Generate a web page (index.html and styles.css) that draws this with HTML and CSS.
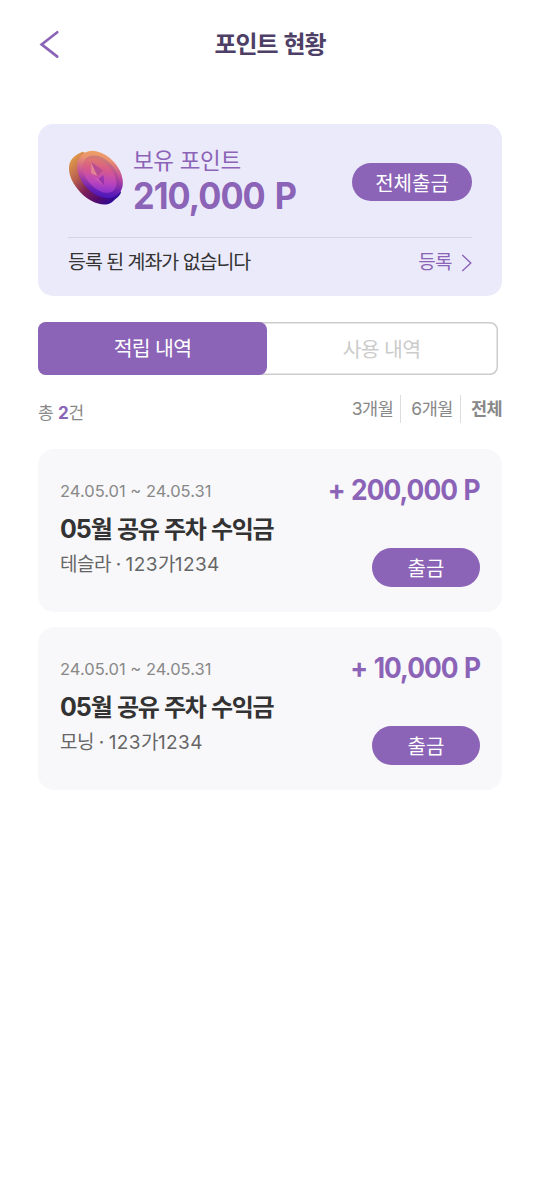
FILE: index.html
```html
<!DOCTYPE html>
<html lang="ko">
<head>
<meta charset="utf-8">
<title>포인트 현황</title>
<link rel="stylesheet" href="styles.css">
</head>
<body>
<header class="header">
  <svg class="back" width="22" height="30" viewBox="0 0 22 30"><path d="M19.3 3.2 3.6 15.4 19.3 27.6" fill="none" stroke="#8b63b7" stroke-width="2.6" stroke-linecap="round" stroke-linejoin="miter"/></svg>
  <h1 class="title">포인트 현황</h1>
</header>
<main class="main">
  <section class="balance">
    <div class="balance-top">
      <svg class="coin" width="56" height="58" viewBox="0 0 56 58">
        <defs>
          <linearGradient id="side" gradientUnits="userSpaceOnUse" x1="2" y1="14" x2="46" y2="54"><stop offset="0" stop-color="#dc944a"/><stop offset=".25" stop-color="#b9604f"/><stop offset=".5" stop-color="#7d2158"/><stop offset=".75" stop-color="#550a6c"/><stop offset="1" stop-color="#2b0a9c"/></linearGradient>
          <linearGradient id="rim" gradientUnits="userSpaceOnUse" x1="12" y1="4" x2="50" y2="48"><stop offset="0" stop-color="#f0b05a"/><stop offset=".25" stop-color="#ea9070"/><stop offset=".5" stop-color="#c5509c"/><stop offset=".75" stop-color="#7022b4"/><stop offset="1" stop-color="#2a0cc0"/></linearGradient>
          <linearGradient id="face" gradientUnits="userSpaceOnUse" x1="17" y1="10" x2="47" y2="42"><stop offset="0" stop-color="#e2885f"/><stop offset=".35" stop-color="#d85c88"/><stop offset=".65" stop-color="#bb45bd"/><stop offset="1" stop-color="#7428d4"/></linearGradient>
        </defs>
        <path d="M15 2.800C8 5 1.500 10 1 18c-.5 9 4.500 18 11.500 25.500S30 56.500 38.500 55.400c4-.5 6.500-3 9-5.400 2-1.800 4.500-3.500 5.500-6.500L40 20Z" fill="url(#side)"/>
        <ellipse cx="32" cy="25.500" rx="27" ry="18.800" transform="rotate(48 32 25.500)" fill="url(#rim)"/>
        <ellipse cx="33" cy="25" rx="21.500" ry="14" transform="rotate(48 33 25)" fill="#8a3598" opacity=".28"/>
        <ellipse cx="31.700" cy="26.300" rx="20.500" ry="12.800" transform="rotate(48 31.700 26.300)" fill="url(#face)"/>
        <path d="M23 13 23.200 24.500 29.500 27Z" fill="#e08394"/><path d="M23 13 29.500 27 35 21.500Z" fill="#b84c92"/>
        <path d="M25.500 28 30.500 30 35.500 26 36.500 37.500Z" fill="#cc5ab4"/><path d="M30.500 30 35.500 26 36.500 37.500Z" fill="#9a35b0"/>
      </svg>
      <div class="points">
        <div class="points-label">보유 포인트</div>
        <div class="points-value">210,000 P</div>
      </div>
      <button class="pill pill-all">전체출금</button>
    </div>
    <div class="account">
      <span class="account-text">등록 된 계좌가 없습니다</span>
      <a class="register">등록<svg width="11" height="18" viewBox="0 0 11 18"><path d="M1.3 1 9.8 9 1.3 17" fill="none" stroke="#8b63b7" stroke-width="1.4"/></svg></a>
    </div>
  </section>
  <nav class="tabs">
    <div class="tab tab-active">적립 내역</div>
    <div class="tab tab-idle">사용 내역</div>
  </nav>
  <div class="summary">
    <div class="count">총 <b>2</b>건</div>
    <div class="filters"><span class="filter">3개월</span><span class="filter">6개월</span><span class="filter filter-on">전체</span></div>
  </div>
  <article class="card">
    <div class="info">
      <div class="date">24.05.01 ~ 24.05.31</div>
      <h2 class="name"><span class="name-num">05</span>월 공유 주차 수익금</h2>
      <div class="car">테슬라 · <span class="car-num">123</span>가<span class="car-num">1234</span></div>
    </div>
    <div class="side">
      <div class="amount">+ 200,000 P</div>
      <button class="pill pill-out">출금</button>
    </div>
  </article>
  <article class="card">
    <div class="info">
      <div class="date">24.05.01 ~ 24.05.31</div>
      <h2 class="name"><span class="name-num">05</span>월 공유 주차 수익금</h2>
      <div class="car">모닝 · <span class="car-num">123</span>가<span class="car-num">1234</span></div>
    </div>
    <div class="side">
      <div class="amount">+ 10,000 P</div>
      <button class="pill pill-out">출금</button>
    </div>
  </article>
</main>
</body>
</html>
```
FILE: styles.css
```css
* { box-sizing: border-box; }
body { margin: 0; background: #fff; color: #333; font-family: Inter, "Noto Sans CJK KR", sans-serif; white-space: nowrap; }
h1, h2 { margin: 0; }
.header { height: 124px; padding: 29px 38px 0; display: grid; grid-template-columns: 22px 1fr 22px; align-items: start; }
.title { padding-top: 1px; font-size: 24px; line-height: 30px; font-weight: 700; letter-spacing: -1.1px; word-spacing: 1.5px; text-align: center; color: #4e3f66; }
.main { padding: 0 38px; }
.balance { height: 172px; padding: 23px 30px 0; border-radius: 15px; background: #ebeafa; }
.balance-top { height: 91px; display: flex; align-items: flex-start; border-bottom: 1.5px solid #d5d3e5; }
.coin { margin-top: 2px; flex: none; }
.points { margin-left: 9px; flex: 1; color: #8b63b7; }
.points-label { font-size: 22.5px; line-height: 28px; letter-spacing: -0.35px; }
.points-value { font-size: 36.5px; line-height: 42px; font-weight: 700; letter-spacing: -1px; word-spacing: 3px; transform: scaleX(0.94); transform-origin: left; }
.pill { border: 0; padding: 0; border-radius: 20px; background: #8b63b7; color: #fff; font-family: inherit; font-weight: 400; font-size: 20px; }
.pill-all { width: 120px; height: 38px; margin-top: 16px; }
.account { display: flex; justify-content: space-between; padding-top: 9px; line-height: 30px; }
.account-text { font-size: 19.5px; letter-spacing: -1.05px; }
.register { display: flex; align-items: center; gap: 9px; padding-top: 1px; font-size: 19px; color: #8b63b7; letter-spacing: -0.6px; }
.tabs { display: flex; width: 460px; height: 53px; margin-top: 26px; border-radius: 8px; box-shadow: inset 0 0 0 1.5px #ccc; }
.tab { width: 229px; font-size: 20.5px; line-height: 54px; text-align: center; letter-spacing: -0.7px; }
.tab-active { background: #8b63b7; color: #fff; border-radius: 8px; }
.tab-idle { color: #ccc; line-height: 56px; }
.summary { display: flex; justify-content: space-between; height: 74px; padding-top: 20px; color: #888; font-size: 17.5px; line-height: 28px; }
.count { padding-top: 4px; font-size: 17px; letter-spacing: -0.2px; }
.count b { color: #8b63b7; }
.filters { display: flex; }
.filter { padding-right: 7px; margin-right: 10px; border-right: 1px solid #ddd; letter-spacing: -0.45px; height: 28px; }
.filter-on { padding: 0; margin: 0; border: 0; font-weight: 700; letter-spacing: -0.6px; }
.card { display: flex; justify-content: space-between; height: 163px; margin-bottom: 15px; padding: 23px 22px 0; border-radius: 16px; background: #f8f8fb; }
.date { margin-top: 7px; font-size: 16.5px; line-height: 25px; color: #888; }
.name { margin-top: 9px; font-size: 24px; line-height: 32px; font-weight: 700; letter-spacing: -1.3px; word-spacing: 1px; }
.name-num { font-size: 25px; letter-spacing: -1px; }
.car { margin-top: 5px; font-size: 19px; line-height: 28px; color: #666; letter-spacing: -0.5px; }
.car-num { letter-spacing: 0.4px; }
.side { display: flex; flex-direction: column; align-items: flex-end; }
.amount { font-size: 28px; line-height: 36px; font-weight: 700; letter-spacing: -1px; word-spacing: 1.2px; color: #8b63b7; transform: scaleX(0.94); transform-origin: right; }
.pill-out { width: 108px; height: 39px; margin-top: 40px; padding-bottom: 1px; }
```
